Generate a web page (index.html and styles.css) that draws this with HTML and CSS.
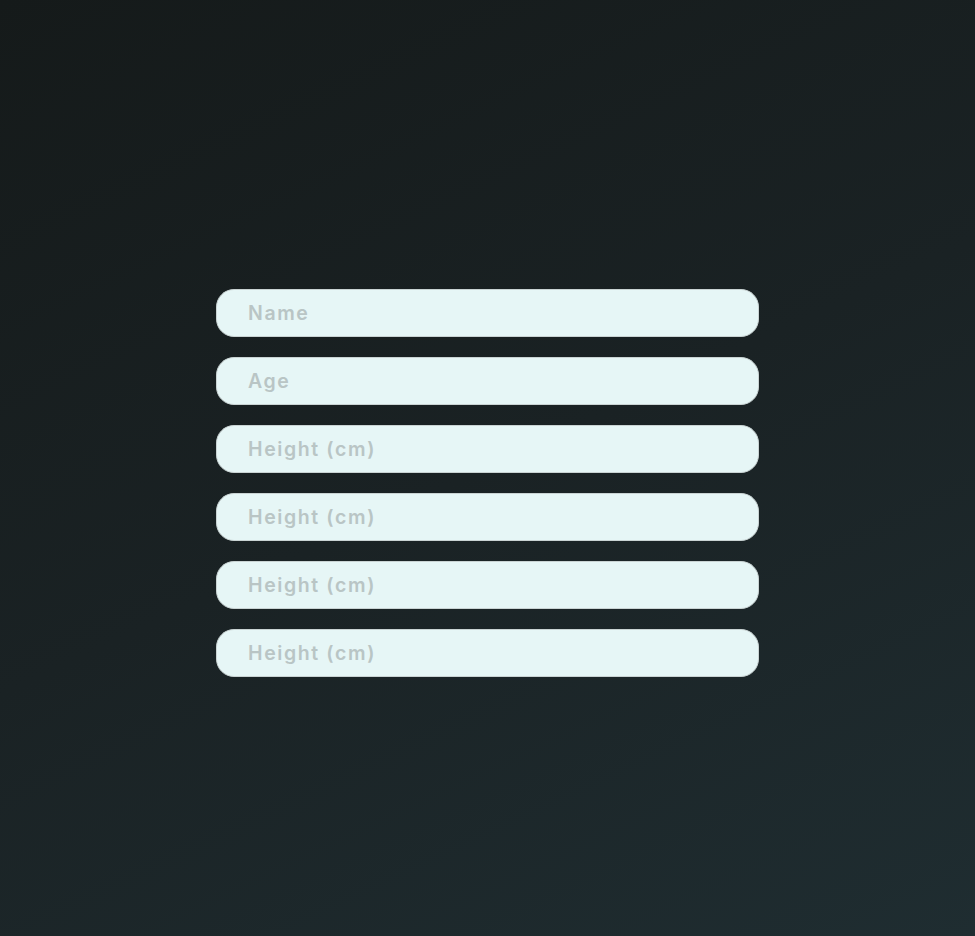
FILE: index.html
```html
<!DOCTYPE html>
<html lang="en">
<head>
<meta charset="utf-8">
<title>Form</title>
<link rel="stylesheet" href="styles.css">
</head>
<body>
<main class="page">
  <form class="form">
    <input class="field" type="text" placeholder="Name">
    <input class="field" type="text" placeholder="Age">
    <input class="field" type="text" placeholder="Height (cm)">
    <input class="field" type="text" placeholder="Height (cm)">
    <input class="field" type="text" placeholder="Height (cm)">
    <input class="field" type="text" placeholder="Height (cm)">
  </form>
</main>
</body>
</html>
```

FILE: styles.css
```css
html, body {
  margin: 0;
  padding: 0;
  height: 100%;
}
body {
  background: linear-gradient(155deg, #151a1a 0%, #1a2224 50%, #1f2d31 100%);
  font-family: Inter, "Open Sans", sans-serif;
}
.page {
  min-height: 100vh;
  box-sizing: border-box;
  padding-top: 289px;
  display: flex;
  justify-content: center;
}
.form {
  width: 543px;
  display: flex;
  flex-direction: column;
  gap: 20px;
}
.field {
  box-sizing: border-box;
  height: 48px;
  width: 100%;
  border: 1px solid #c9d3d3;
  border-radius: 18px;
  background: #e6f6f6;
  padding: 0 0 0 31px;
  font-family: Inter, "Open Sans", sans-serif;
  font-weight: 600;
  font-size: 19.5px;
  letter-spacing: 1.6px;
  color: #2a3333;
  outline: none;
}
.field::placeholder {
  color: #b9c5c5;
  opacity: 1;
}
```
